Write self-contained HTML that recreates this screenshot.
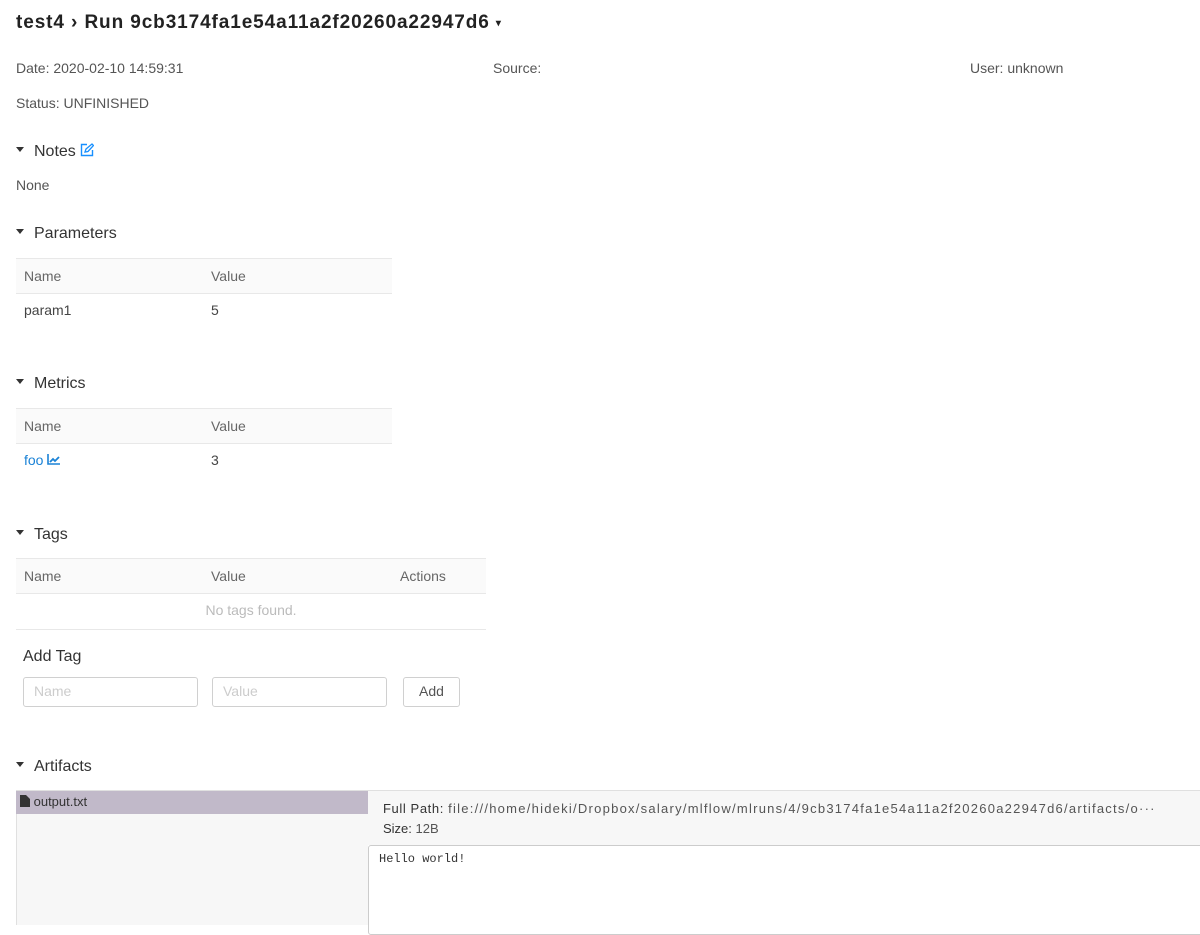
<!DOCTYPE html>
<html><head><meta charset="utf-8"><style>
*{box-sizing:border-box}
body{margin:0;width:1200px;height:925px;overflow:hidden;background:#fff;font-family:"Liberation Sans",sans-serif;color:#333;font-size:14px;position:relative}
.a{position:absolute;white-space:nowrap}
.g{color:#555}
.h{font-size:16px;color:#333}
.tri{display:inline-block;width:0;height:0;border-left:4px solid transparent;border-right:4px solid transparent;border-top:5px solid #333;margin-right:10px;vertical-align:middle;position:relative;top:-2px}
.th{position:absolute;background:#fafafa;border-top:1px solid #e8e8e8;border-bottom:1px solid #e8e8e8;height:36px}
.th span,.tr span{position:absolute;top:9px;color:#666}
.tr span{color:#444}
.inp{position:absolute;border:1px solid #d0d0d0;border-radius:3px;height:30px;color:#ccc;padding:5px 10px;font-size:14px}
</style></head><body>
<div class="a" style="left:16px;top:12px;font-size:19px;color:#222;font-weight:bold;letter-spacing:0.9px">test4 › Run 9cb3174fa1e54a11a2f20260a22947d6 <span style="font-size:10px;position:relative;top:-2px">▾</span></div>
<div class="a g" style="left:16px;top:60px">Date: 2020-02-10 14:59:31</div>
<div class="a g" style="left:493px;top:60px">Source:</div>
<div class="a g" style="left:970px;top:60px">User: unknown</div>
<div class="a g" style="left:16px;top:95px">Status: UNFINISHED</div>

<div class="a h" style="left:16px;top:143px"><span class="tri"></span>Notes <svg width="14" height="14" viewBox="0 0 14 14" style="vertical-align:-1px"><path d="M7 1.5H1.5v11h11V7" fill="none" stroke="#1890ff" stroke-width="1.4"/><path d="M5 9l1-3 6-5 1.5 1.5-5.5 6z" fill="none" stroke="#1890ff" stroke-width="1.3"/></svg></div>
<div class="a g" style="left:16px;top:177px">None</div>

<div class="a h" style="left:16px;top:225px"><span class="tri"></span>Parameters</div>
<div class="th" style="left:16px;top:258px;width:376px"><span style="left:8px">Name</span><span style="left:195px">Value</span></div>
<div class="a tr" style="left:16px;top:293px;width:376px;height:36px"><span style="left:8px">param1</span><span style="left:195px">5</span></div>

<div class="a h" style="left:16px;top:375px"><span class="tri"></span>Metrics</div>
<div class="th" style="left:16px;top:408px;width:376px"><span style="left:8px">Name</span><span style="left:195px">Value</span></div>
<div class="a tr" style="left:16px;top:443px;width:376px;height:36px"><span style="left:8px;color:#1a82d6">foo <svg width="13" height="11" viewBox="0 0 13 11"><path d="M1 0v10h12" fill="none" stroke="#1a82d6" stroke-width="1.6"/><path d="M3 8l3-3 2 2 4-4" fill="none" stroke="#1a82d6" stroke-width="1.8"/></svg></span><span style="left:195px">3</span></div>

<div class="a h" style="left:16px;top:526px"><span class="tri"></span>Tags</div>
<div class="th" style="left:16px;top:558px;width:470px"><span style="left:8px">Name</span><span style="left:195px">Value</span><span style="left:384px">Actions</span></div>
<div class="a" style="left:16px;top:593px;width:470px;height:37px;border-bottom:1px solid #e8e8e8;text-align:center;color:#bbb;padding-top:9px">No tags found.</div>

<div class="a" style="left:23px;top:648px;font-size:16px;color:#333">Add Tag</div>
<div class="inp" style="left:23px;top:677px;width:175px">Name</div>
<div class="inp" style="left:212px;top:677px;width:175px">Value</div>
<div class="inp" style="left:403px;top:677px;width:57px;color:#555;text-align:center;padding:5px 0">Add</div>

<div class="a h" style="left:16px;top:758px"><span class="tri"></span>Artifacts</div>
<div class="a" style="left:16px;top:790px;width:1184px;height:1px;background:#e0e0e0"></div>
<div class="a" style="left:16px;top:791px;width:352px;height:134px;background:#f7f7f7;border-left:1px solid #e0e0e0"></div>
<div class="a" style="left:16px;top:791px;width:352px;height:23px;background:#c1b9c9;padding:3px 4px;color:#333;font-size:13px"><svg width="10" height="12" viewBox="0 0 10 12" style="vertical-align:-1px"><path d="M0 0h6l4 4v8H0z" fill="#333"/></svg> output.txt</div>
<div class="a" style="left:368px;top:791px;width:832px;height:54px;background:#f7f7f7"></div>
<div class="a" style="left:383px;top:801px;font-size:13px;color:#555;letter-spacing:0.6px"><span style="color:#333">Full Path:</span> <span style="letter-spacing:1.25px">file:///home/hideki/Dropbox/salary/mlflow/mlruns/4/9cb3174fa1e54a11a2f20260a22947d6/artifacts/o···</span></div>
<div class="a" style="left:383px;top:821px;font-size:13px;color:#555"><span style="color:#333">Size:</span> 12B</div>
<div class="a" style="left:368px;top:845px;width:840px;height:90px;border:1px solid #ccc;border-radius:3px;background:#fff;padding:6px 10px;font-family:'Liberation Mono',monospace;font-size:12px;color:#333">Hello world!</div>
</body></html>
